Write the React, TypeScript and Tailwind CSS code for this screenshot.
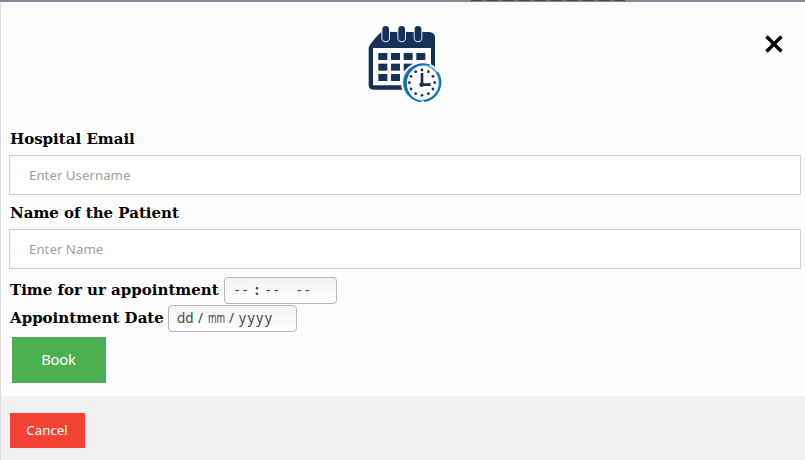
import React from 'react';

const serif = "font-['DejaVu_Serif',serif] font-bold text-black whitespace-nowrap text-[15px]";
const sans = "font-['Noto_Sans',sans-serif]";

function CalendarIcon() {
  const dots = Array.from({ length: 12 }, (_, i) => {
    const a = (i * Math.PI) / 6;
    return [201 + 38 * Math.sin(a), 203 - 38 * Math.cos(a)];
  });
  return (
    <svg width="100" height="95" viewBox="0 0 300 285" className="block">
      <path d="M41 98 Q42 91 52 80 L68 61 Q76 51 86 51 H222 Q240 52 240 68 V170 H228 V99 H54 V211 H150 V224 H55 Q41 224 41 210 Z" fill="#17305a" />
      {[92, 140, 189].map((x) => (
        <g key={x}>
          <path d={`M${x - 13} 49 V69 A13 13 0 0 0 ${x + 13} 69 V49 Z`} fill="#e8edf3" />
          <rect x={x - 10} y="33" width="20" height="46" rx="10" fill="#17305a" />
        </g>
      ))}
      {[70, 108, 146, 184].map((x) =>
        [114, 146, 177].map((y) => (
          <rect key={`${x}-${y}`} x={x} y={y} width="27" height="21" fill="#17305a" />
        )),
      )}
      <circle cx="200" cy="203" r="62" fill="#fff" />
      <circle cx="200" cy="203" r="54" fill="#fff" stroke="#69aedb" strokeWidth="6" />
      <path d="M224 150 A57 57 0 1 0 197 260 A54 54 0 0 1 224 150 Z" fill="#126bb0" stroke="#126bb0" strokeWidth="3" />
      <path d="M247 172 A56 56 0 0 1 207 258" fill="none" stroke="#126bb0" strokeWidth="6" />
      {dots.map(([x, y], i) => (
        <circle key={i} cx={x} cy={y} r="4.2" fill="#17305a" />
      ))}
      <path d="M201 174 V209 H227" fill="none" stroke="#17305a" strokeWidth="8" />
      <circle cx="200" cy="209" r="7" fill="#17305a" />
    </svg>
  );
}

function Field({ label, placeholder }: { label: string; placeholder: string }) {
  return (
    <div className="h-[74px]">
      <label className={`${serif} block h-[28px] pl-px leading-[24px]`}>{label}</label>
      <input
        placeholder={placeholder}
        className={`${sans} block h-[40px] w-[792px] border border-[#cfcfcf] bg-white px-[19px] text-[13.3px] placeholder:text-[#a0a0a0]`}
      />
    </div>
  );
}

const picker =
  "flex h-[27px] items-center rounded-[4px] border border-[#b5b5b5] bg-gradient-to-b from-[#f3f3f3] to-white text-[#444] font-['Noto_Sans',sans-serif] text-[13.5px] whitespace-pre";

export default function App() {
  return (
    <div className="flex h-[460px] w-[805px] flex-col overflow-hidden bg-[#fefefe]">
      <div className="flex h-[2px] shrink-0 bg-[#8c8499] pl-[471px]">
        <div className="h-px w-[154px] bg-[repeating-linear-gradient(90deg,#2d5630_0_11px,#68716d_11px_16px)]" />
      </div>
      <div className="flex h-[394px] shrink-0 flex-col border-l border-[#dcdce4] pl-[8px]">
        <div className="flex h-[125px] shrink-0 justify-between pt-[13px] pr-[21px] pl-[346px]">
          <CalendarIcon />
          <svg width="20" height="20" viewBox="0 0 20 20" className="mt-[19px]">
            <path d="M2.5 2.5 L17.5 17.5 M17.5 2.5 L2.5 17.5" stroke="#000" strokeWidth="3.4" />
          </svg>
        </div>
        <Field label="Hospital Email" placeholder="Enter Username" />
        <Field label="Name of the Patient" placeholder="Enter Name" />
        <div className="flex h-[30px] shrink-0 items-start gap-[5px] pt-[2px] pl-px">
          <span className={`${serif} w-[209px] leading-[27px]`}>Time for ur appointment</span>
          <div className={`${picker} w-[113px] pl-[10px]`}>
            <span className="w-[19px] tracking-[3.6px]">--</span>
            <span className="w-[12px] pl-[1px] font-bold">:</span>
            <span className="w-[31px] tracking-[3.6px]">--</span>
            <span className="tracking-[3.6px]">--</span>
          </div>
        </div>
        <div className="flex h-[30px] shrink-0 items-start gap-[5px] pl-px">
          <span className={`${serif} w-[153px] leading-[27px]`}>Appointment Date</span>
          <div className={`${picker} w-[129px] pl-[8px]`}>
            <span className="w-[21px]">dd</span>
            <span className="w-[10px]">/</span>
            <span className="inline-block w-[24px] origin-left scale-x-[0.68]">mm</span>
            <span className="-ml-[3px] w-[10px]">/</span>
            <span className="tracking-[1.8px]">yyyy</span>
          </div>
        </div>
        <button className={`${sans} mt-[2px] ml-[2.5px] h-[46px] w-[94px] shrink-0 bg-[#4caf50] pb-px text-[14.8px] tracking-[-0.2px] text-white`}>Book</button>
      </div>
      <div className="flex grow border-l border-[#dcdce4] bg-[#f1f1f1] pt-[16.5px] pl-[8.5px]">
        <button className={`${sans} h-[35px] w-[75px] bg-[#f44336] pt-px text-[13.3px] text-white`}>Cancel</button>
      </div>
    </div>
  );
}
